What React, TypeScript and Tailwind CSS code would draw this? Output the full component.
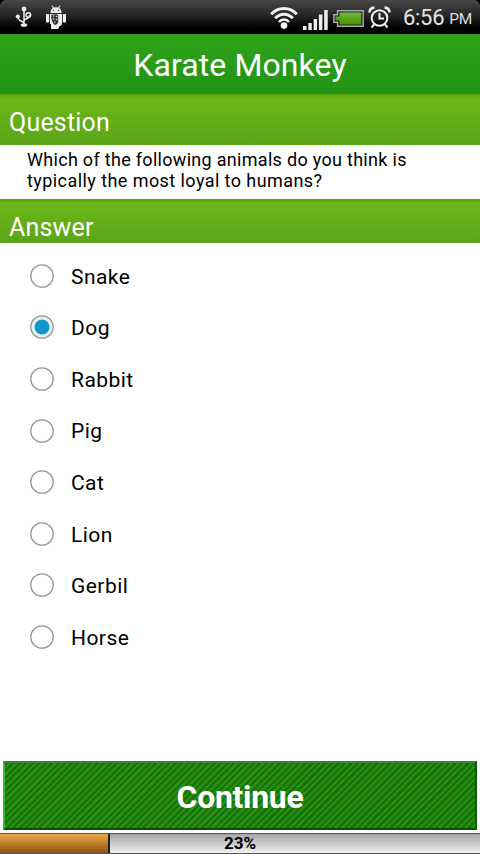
import React from "react";

const answers = ["Snake", "Dog", "Rabbit", "Pig", "Cat", "Lion", "Gerbil", "Horse"];

function UsbIcon() {
  return (
    <svg className="ml-[15px] h-[22px] w-[17px]" viewBox="0 0 17 22" fill="none" stroke="#eee" strokeWidth="1.5">
      <path d="M9 3v16M9 16.500L5 14.500Q3 13.500 3 10.500M9 14l4-2q1.500-1 1.500-3" />
      <circle cx="9" cy="3" r="2.400" fill="#eee" stroke="none" />
      <circle cx="2.800" cy="10.500" r="2.100" fill="#eee" stroke="none" />
      <circle cx="13.300" cy="9" r="2.300" />
      <ellipse cx="9" cy="19" rx="3.300" ry="1.800" fill="#eee" stroke="none" />
    </svg>
  );
}

function RobotIcon() {
  return (
    <svg className="ml-[13px] h-[25px] w-[22px]" viewBox="0 0 22 25" fill="#eee">
      <path d="M5.500 8Q5.500 4 8 3L6.500 1 7.500.5 9 2.500q2-.600 4 0L14.500.5l1 .5L14 3q2.500 1 2.500 5Z" />
      <rect x="1" y="9" width="3.200" height="8.500" rx=".8" />
      <rect x="17.800" y="9" width="3.200" height="8.500" rx=".8" />
      <path d="M5 9h12v9q0 3-3 3.500v.500q0 2-1.500 2H6V19H5Z" />
      <path d="M6.200 10q4-1.500 7 0v7q-1 3-3.500 3Q6 17 6.200 10Z" fill="#333" />
      <g fill="#ddd">
        <circle cx="8.500" cy="11" r=".8" /><circle cx="11.500" cy="11.500" r=".8" />
        <circle cx="8.500" cy="14" r=".8" /><circle cx="11.500" cy="14.500" r=".8" /><circle cx="9.800" cy="17" r=".8" />
      </g>
      <g fill="#444"><circle cx="8.500" cy="5.500" r=".7" /><circle cx="13.500" cy="5.500" r=".7" /></g>
    </svg>
  );
}

function WifiIcon() {
  return (
    <svg className="mt-px h-[24px] w-[28px]" viewBox="0 0 28 24" fill="none" stroke="#f2f2f2" strokeWidth="3">
      <path d="M1.200 8.200Q6.500 2.500 14 2.500T26.800 8.200" />
      <path d="M5.200 12.300Q9 8.200 14 8.200T22.800 12.300" />
      <path d="M9 16Q11 13.500 14 13.500T19 16" strokeWidth="2.600" />
      <circle cx="14" cy="19.600" r="3.300" fill="#f2f2f2" stroke="none" />
    </svg>
  );
}

function SignalIcon() {
  return (
    <svg className="mt-[5px] ml-[5px] h-[20px] w-[25px]" viewBox="0 0 25 20" fill="#eee">
      <rect x="0" y="16" width="3.500" height="4" />
      <rect x="5.300" y="13" width="3.500" height="7" />
      <rect x="10.600" y="9" width="3.500" height="11" />
      <rect x="15.900" y="4.500" width="3.500" height="15.500" />
      <rect x="21.200" y="0" width="3.500" height="20" />
    </svg>
  );
}

function BatteryIcon() {
  return (
    <svg className="mt-[2px] ml-[5px] h-[17px] w-[31px]" viewBox="0 0 31 17">
      <defs>
        <linearGradient id="charge" x2="0" y2="1">
          <stop stopColor="#78b84a" /><stop offset=".5" stopColor="#5ba51e" /><stop offset="1" stopColor="#479403" />
        </linearGradient>
      </defs>
      <path d="M4.500 .7h25.700v15.500H4.500v-4H.8v-7.500h3.700Z" fill="#222" stroke="#aaa" strokeWidth="1.400" />
      <path d="M6.500 2.500h21.800v12H6.500v-4H2.500v-4h4Z" fill="url(#charge)" />
    </svg>
  );
}

function AlarmIcon() {
  return (
    <svg className="mt-px ml-[4px] h-[23px] w-[23px]" viewBox="0 0 23 23" fill="none" stroke="#eee" strokeWidth="2">
      <circle cx="11.500" cy="12" r="7.800" />
      <path d="M11.500 7v5.500H16M6 18.500L3.500 21.500M17 18.500L19.500 21.500" />
      <path d="M1.500 6.500Q1.500 2 6.500 1.500M16.500 1.500Q21.500 2 21.500 6.500" strokeWidth="2.500" />
    </svg>
  );
}

function SectionTitle({ text, className }: { text: string; className: string }) {
  return (
    <div className={`flex items-end bg-linear-to-b from-[#70b818] to-[#5aa518] pl-[9px] text-[25px] tracking-[0.2px] text-white ${className}`}>
      <h2 className="leading-[30px]">{text}</h2>
    </div>
  );
}

function Radio({ selected }: { selected: boolean }) {
  return (
    <svg className="h-[24px] w-[24px]" viewBox="0 0 24 24">
      <circle cx="12" cy="12" r="11.200" fill={selected ? "#e3f2fa" : "#fff"} stroke="#999" strokeWidth="1.300" />
      {selected && <circle cx="12" cy="12" r="7.500" fill="#1296cb" />}
    </svg>
  );
}

export default function App() {
  return (
    <div className="flex h-[854px] w-[480px] flex-col overflow-hidden bg-white font-[Roboto,sans-serif] text-black">
      <div className="h-[34px] bg-black">
        <header className="flex h-[34px] items-center rounded-t-[6px] bg-linear-to-b from-[#484848] via-[#222] via-50% to-black">
          <UsbIcon />
          <RobotIcon />
          <div className="ml-auto flex w-[210px] items-center">
            <WifiIcon />
            <SignalIcon />
            <BatteryIcon />
            <AlarmIcon />
            <span className="mt-[2px] ml-[12px] text-[22px] leading-[32px] tracking-[-0.3px] whitespace-nowrap text-[#e4e4e4]">6:56</span>
            <span className="mt-[6px] ml-[5px] text-[15.5px] tracking-[-0.2px] text-[#ddd]">PM</span>
          </div>
        </header>
      </div>
      <div className="h-[60px] bg-linear-to-b from-[#30a31c] to-[#219313] text-center">
        <h1 className="text-[32px] leading-[63px] tracking-[0.1px] text-white">Karate Monkey</h1>
      </div>
      <SectionTitle text="Question" className="h-[51px] pb-[7px] shadow-[inset_0_4px_3px_-2px_#559d14]" />
      <p className="h-[54px] pt-[4px] pl-[27px] text-[18px] leading-[21px] tracking-[0.3px]">
        Which of the following animals do you think is<br />
        <span className="tracking-[0.43px]">typically the most loyal to humans?</span>
      </p>
      <SectionTitle text="Answer" className="h-[44px] shadow-[inset_0_4px_3px_-2px_#559d14]" />
      <ul className="flex flex-1 flex-col pt-[7px]">
        {answers.map((a) => (
          <li key={a} className="flex h-[51.6px] items-center gap-[17px] pl-[30px] text-[21px] tracking-[0.45px]">
            <Radio selected={a === "Dog"} />
            <span className="pt-[3px]">{a}</span>
          </li>
        ))}
      </ul>
      <button className="mx-[3px] mb-[3px] h-[69px] border-2 border-t-[#38853a] border-r-[#085e04] border-b-[#085104] border-l-[#31bd31] bg-[repeating-linear-gradient(135deg,#147604_0px,#147604_2.300px,#2b8b14_2.300px,#2b8b14_4.600px)] pt-[2px] text-[32px] font-bold tracking-[-0.3px] text-white">
        Continue
      </button>
      <div className="relative h-[21px] border-y border-y-[#555] bg-linear-to-b from-[#a5a5a5] to-[#f2f2f2]">
        <div className="h-full w-[110px] border-r-2 border-r-[#222] bg-linear-to-b from-[#eeaa46] to-[#8f5715]" />
        <span className="absolute inset-0 text-center text-[17px] leading-[19px] font-bold">23%</span>
      </div>
    </div>
  );
}
